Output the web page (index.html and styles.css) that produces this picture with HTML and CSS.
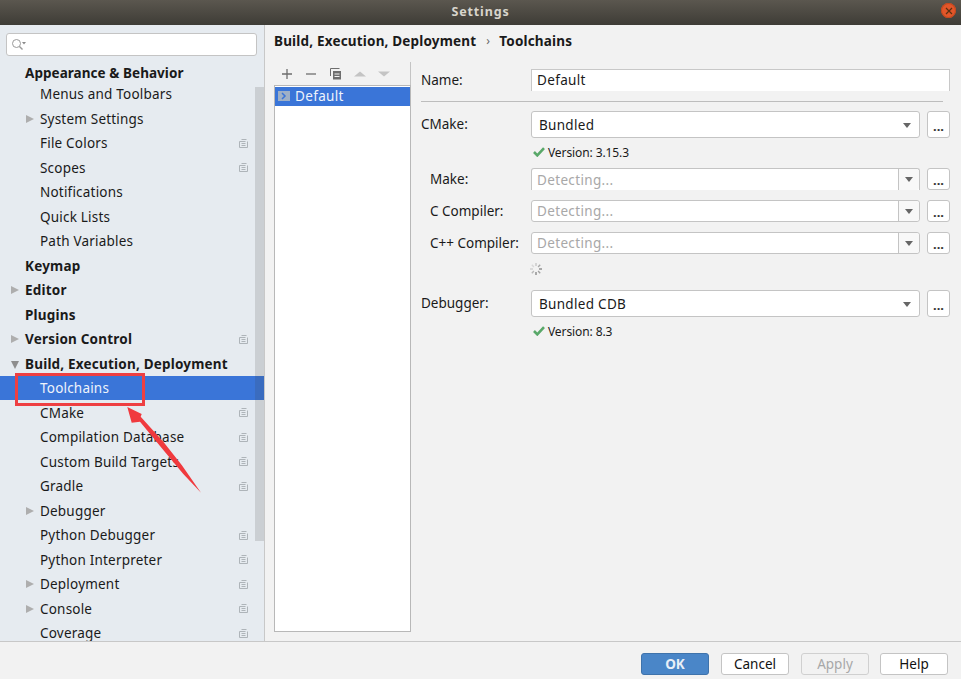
FILE: index.html
```html
<!DOCTYPE html>
<html lang="en">
<head>
<meta charset="utf-8">
<title>Settings</title>
<link rel="stylesheet" href="styles.css">
</head>
<body>
<svg class="defs" width="0" height="0" aria-hidden="true">
  <symbol id="proj" viewBox="0 0 9 9">
    <path d="M2.5 .5H7.5M.5 2.5H6.5M.5 2.5V8.5H8.5V2.5M2.5 4.5H6.5M2.5 6.5H6.5" fill="none" stroke="#aeb4b9" stroke-width="1"/>
  </symbol>
  <symbol id="check" viewBox="0 0 12 10">
    <path d="M1 5 4.300 8.400 11 1.200" fill="none" stroke="#59a869" stroke-width="2.600"/>
  </symbol>
</svg>
<div class="window">
  <header class="titlebar">
    <span class="title">Settings</span>
    <span class="close"><svg width="8" height="8" viewBox="0 0 8 8"><path d="M1 1 7 7M7 1 1 7" stroke="#5a3010" stroke-width="1.2"/></svg></span>
  </header>
  <div class="main">
    <aside class="sidebar">
      <div class="search">
        <svg width="15" height="13" viewBox="0 0 15 13"><circle cx="5.5" cy="5.5" r="4" fill="none" stroke="#9a9a9a"/><path d="M8.5 8.5 11.5 11.5" stroke="#9a9a9a" stroke-width="1.4"/><path d="M11 4H15L13 6.5Z" fill="#8a8a8a"/></svg>
      </div>
      <div class="tree">
        <div class="row top head"><span class="slot"></span><span class="label">Appearance &amp; Behavior</span></div>
        <div class="row child"><span class="slot"></span><span class="label">Menus and Toolbars</span></div>
        <div class="row child"><span class="slot arrow"></span><span class="label">System Settings</span></div>
        <div class="row child"><span class="slot"></span><span class="label">File Colors</span><svg class="pi"><use href="#proj"/></svg></div>
        <div class="row child"><span class="slot"></span><span class="label">Scopes</span><svg class="pi"><use href="#proj"/></svg></div>
        <div class="row child"><span class="slot"></span><span class="label">Notifications</span></div>
        <div class="row child"><span class="slot"></span><span class="label">Quick Lists</span></div>
        <div class="row child"><span class="slot"></span><span class="label">Path Variables</span></div>
        <div class="row top"><span class="slot"></span><span class="label">Keymap</span></div>
        <div class="row top"><span class="slot arrow"></span><span class="label">Editor</span></div>
        <div class="row top"><span class="slot"></span><span class="label">Plugins</span></div>
        <div class="row top"><span class="slot arrow"></span><span class="label">Version Control</span><svg class="pi"><use href="#proj"/></svg></div>
        <div class="row top"><span class="slot arrow open"></span><span class="label">Build, Execution, Deployment</span></div>
        <div class="row child selected"><span class="slot"></span><span class="label">Toolchains</span></div>
        <div class="row child"><span class="slot"></span><span class="label">CMake</span><svg class="pi"><use href="#proj"/></svg></div>
        <div class="row child"><span class="slot"></span><span class="label">Compilation Database</span><svg class="pi"><use href="#proj"/></svg></div>
        <div class="row child"><span class="slot"></span><span class="label">Custom Build Targets</span><svg class="pi"><use href="#proj"/></svg></div>
        <div class="row child"><span class="slot"></span><span class="label">Gradle</span><svg class="pi"><use href="#proj"/></svg></div>
        <div class="row child"><span class="slot arrow"></span><span class="label">Debugger</span></div>
        <div class="row child"><span class="slot"></span><span class="label">Python Debugger</span><svg class="pi"><use href="#proj"/></svg></div>
        <div class="row child"><span class="slot"></span><span class="label">Python Interpreter</span><svg class="pi"><use href="#proj"/></svg></div>
        <div class="row child"><span class="slot arrow"></span><span class="label">Deployment</span><svg class="pi"><use href="#proj"/></svg></div>
        <div class="row child"><span class="slot arrow"></span><span class="label">Console</span><svg class="pi"><use href="#proj"/></svg></div>
        <div class="row child"><span class="slot"></span><span class="label">Coverage</span><svg class="pi"><use href="#proj"/></svg></div>
      </div>
      <div class="scrollthumb"></div>
    </aside>
    <section class="content">
      <div class="crumbs"><span>Build, Execution, Deployment</span><span class="sep">›</span><span>Toolchains</span></div>
      <div class="split">
        <div class="listcol">
          <div class="toolbar">
            <svg width="122" height="12" viewBox="0 0 122 12">
              <path d="M3 6H13M8 1V11" stroke="#6e6e6e" stroke-width="1.3"/>
              <path d="M27 6H37" stroke="#6e6e6e" stroke-width="1.3"/>
              <path d="M51.5 .5H60.5M51.5 .5V8" fill="none" stroke="#6e6e6e"/>
              <path d="M54 3H62V11.5H54Z" fill="#6e6e6e"/><path d="M55.5 6H60.5M55.5 8.500H60.5" stroke="#f2f2f2"/>
              <path d="M75 8.500 81 3.500 87 8.500Z" fill="#c4c4c4"/>
              <path d="M99 3.500H111L105 8.500Z" fill="#c4c4c4"/>
            </svg>
          </div>
          <div class="list">
            <div class="listitem"><span class="cfg"><svg width="12" height="10" viewBox="0 0 12 10"><rect width="12" height="10" fill="#9fb0c6"/><path d="M4 2 7 5 4 8" fill="none" stroke="#3a75d8" stroke-width="1.500"/></svg></span>Default</div>
          </div>
        </div>
        <div class="form">
          <div class="namerow"><label class="lab">Name:</label><div class="nameinput">Default</div></div>
          <div class="hr"></div>
          <div class="line tall"><label class="lab">CMake:</label><div class="combo">Bundled<span class="caret"></span></div><button class="more">...</button></div>
          <div class="version"><svg width="12" height="10"><use href="#check"/></svg>Version: 3.15.3</div>
          <div class="line short first"><label class="lab ind">Make:</label><div class="combo edit clipped"><span class="ph">Detecting...</span><span class="drop"><span class="caret"></span></span></div><button class="more">...</button></div>
          <div class="line short"><label class="lab ind">C Compiler:</label><div class="combo edit"><span class="ph">Detecting...</span><span class="drop"><span class="caret"></span></span></div><button class="more">...</button></div>
          <div class="line short"><label class="lab ind">C++ Compiler:</label><div class="combo edit"><span class="ph">Detecting...</span><span class="drop"><span class="caret"></span></span></div><button class="more">...</button></div>
          <div class="spin">
            <svg width="14" height="14" viewBox="0 0 14 14" fill="none" stroke-width="1.400">
              <path d="M7 1V4" stroke="#c8c8c8"/><path d="M11.2 2.800 9.100 4.900" stroke="#a8a8a8"/><path d="M13 7H10" stroke="#8a8a8a"/><path d="M11.200 11.200 9.100 9.100" stroke="#a0a0a0"/><path d="M7 13V10" stroke="#8a8a8a"/><path d="M2.800 11.200 4.900 9.100" stroke="#b8b8b8"/><path d="M1 7H4" stroke="#d0d0d0"/><path d="M2.800 2.800 4.900 4.900" stroke="#d8d8d8"/>
            </svg>
          </div>
          <div class="line tall"><label class="lab">Debugger:</label><div class="combo">Bundled CDB<span class="caret"></span></div><button class="more">...</button></div>
          <div class="version"><svg width="12" height="10"><use href="#check"/></svg>Version: 8.3</div>
        </div>
      </div>
    </section>
  </div>
  <footer class="footer">
    <button class="btn ok">OK</button>
    <button class="btn">Cancel</button>
    <button class="btn off">Apply</button>
    <button class="btn help">Help</button>
  </footer>
</div>
<svg class="annotation" width="961" height="679" viewBox="0 0 961 679" aria-hidden="true">
  <rect x="16.500" y="374.500" width="127" height="30" fill="none" stroke="#ee3f42" stroke-width="3"/>
  <path d="M127.300 407 141.700 414 140.700 416.700 163.300 441.700 181.700 465 201 492.700 183.300 474 163.300 450 140 421.700 131.700 422.700Z" fill="#f03a3e"/>
</svg>
</body>
</html>
```
FILE: styles.css
```css
* { box-sizing: border-box; }
html, body { margin: 0; height: 100%; overflow: hidden; }
body { font-family: "Noto Sans", "Open Sans", sans-serif; font-size: 13.5px; color: #1a1a1a; background: #f2f2f2; }
.defs { position: absolute; }
.window { height: 679px; display: flex; flex-direction: column; }

.titlebar { height: 25px; flex: none; display: flex; align-items: center; justify-content: center; background: linear-gradient(#5b574f, #3e3c36); position: relative; padding-bottom: 2px; }
.title { color: #d8d5cc; font-weight: 700; font-size: 12.5px; letter-spacing: .85px; }
.close { position: absolute; left: 941px; top: 3px; width: 15px; height: 15px; border-radius: 50%; background: #e2562a; display: flex; align-items: center; justify-content: center; box-shadow: inset 0 0 0 1px #c2481f; }

.main { flex: 1; display: flex; min-height: 0; }
.sidebar { width: 265px; flex: none; background: #e6ebf0; border-right: 1px solid #c8c8c8; position: relative; overflow: hidden; padding-top: 8px; }
.search { margin: 0 7px 0 6px; height: 23px; background: #fff; border: 1px solid #c4c4c4; border-radius: 3px; display: flex; align-items: center; padding-left: 4px; }
.tree { padding-top: 8.25px; }
.row { height: 24.5px; display: flex; align-items: center; padding-right: 16px; letter-spacing: .2px; white-space: nowrap; }
.row.head { height: 17.5px; letter-spacing: .05px; }
.slot { width: 8px; height: 10px; flex: none; }
.top .slot { margin-left: 11px; margin-right: 6px; }
.child .slot { margin-left: 26px; margin-right: 6px; }
.top .label { font-weight: 700; }
.arrow { position: relative; }
.arrow::before { content: ""; position: absolute; left: 0; top: 1px; border-left: 8px solid #aeaeae; border-top: 4px solid transparent; border-bottom: 4px solid transparent; }
.arrow.open::before { left: 0; top: 2px; border-left: 4px solid transparent; border-right: 4px solid transparent; border-top: 8px solid #8e8e8e; border-bottom: 0; }
.pi { width: 9px; height: 9px; margin-left: auto; flex: none; }
.selected { background: #3a75d8; color: #eef3fb; }
.scrollthumb { position: absolute; left: 255px; top: 62px; width: 9px; height: 454px; background: rgba(60, 60, 60, .16); }

.content { flex: 1; min-width: 0; display: flex; flex-direction: column; padding-left: 9px; }
.crumbs { height: 37px; flex: none; display: flex; align-items: center; font-weight: 700; padding-bottom: 6px; letter-spacing: .18px; }
.sep { font-weight: 400; font-size: 12px; color: #666; margin: 0 9px 0 10px; }
.split { flex: 1; display: flex; min-height: 0; }
.listcol { width: 137px; flex: none; display: flex; flex-direction: column; padding-bottom: 9px; position: relative; }
.toolbar { height: 23px; flex: none; display: flex; align-items: center; padding-left: 5px; border-right: 1px solid #c4c4c4; }
.list { flex: 1; background: #fff; border: 1px solid #b8b8b8; padding-top: 1px; }
.listitem { height: 19px; background: #3a75d8; color: #eef3fb; display: flex; align-items: center; padding: 0 0 1px 3px; letter-spacing: .35px; }
.cfg { display: flex; margin-right: 5px; }

.form { flex: 1; min-width: 0; padding: 7px 11px 0 10px; }
.namerow { display: flex; align-items: center; height: 22px; }
.lab { width: 110px; flex: none; letter-spacing: 0; white-space: nowrap; }
.lab.ind { padding-left: 9px; }
.nameinput { flex: 1; height: 22px; background: #fff; border: 1px solid #c8c8c8; border-width: 1px 1px 0; padding: 0 5px; line-height: 21px; letter-spacing: .35px; }
.hr { height: 1px; background: #bdbdbd; width: 522px; margin: 10px 0 9px; }
.line { display: flex; align-items: center; }
.line.tall { height: 27px; }
.line.tall .lab { padding-bottom: 2px; }
.line.short { height: 22px; margin-bottom: 10px; }
.line.first { margin-top: 2px; }
.combo { width: 389px; flex: none; height: 100%; background: #fff; border: 1px solid #c4c4c4; border-radius: 3px; display: flex; align-items: center; padding-left: 7px; position: relative; letter-spacing: .3px; }
.combo > .caret { position: absolute; right: 8px; top: 11px; }
.caret { width: 0; height: 0; border-left: 4.5px solid transparent; border-right: 4.5px solid transparent; border-top: 5px solid #666; display: block; }
.combo.edit { padding-left: 5px; padding-right: 0; }
.combo.clipped { border-bottom: 0; border-radius: 3px 3px 0 0; }
.ph { color: #a8a8a8; letter-spacing: .35px; }
.drop { margin-left: auto; width: 21px; height: 100%; border-left: 1px solid #c4c4c4; background: #f8f8f8; display: flex; align-items: center; justify-content: center; border-radius: 0 3px 3px 0; }
.more { width: 23px; height: 100%; flex: none; margin-left: 7px; padding: 3px 0 0; background: #fff; border: 1px solid #c4c4c4; border-radius: 3px; font: 700 13px "Noto Sans", sans-serif; color: #333; line-height: 1; }
.version { height: 28px; padding: 0 0 0 112px; display: flex; align-items: center; gap: 3px; font-size: 12px; letter-spacing: -.1px; }
.spin { height: 14px; margin: -2px 0 14px 108px; }

.footer { height: 38px; flex: none; border-top: 1px solid #c8c8c8; display: flex; justify-content: flex-end; align-items: flex-start; gap: 12px; padding: 11px 13px 0 0; }
.btn { width: 68px; height: 22px; padding: 0; background: #fff; border: 1px solid #c4c4c4; border-radius: 3px; font: 13.5px "Noto Sans", sans-serif; color: #111; }
.btn.ok { background: #4a86c8; border-color: #3f73ab; color: #e8eff7; font-weight: 700; }
.btn.off { background: #f2f2f2; color: #a8a8a8; border-color: #d0d0d0; }
.btn.help { margin-left: -1px; }
.annotation { position: absolute; left: 0; top: 0; pointer-events: none; }
```
